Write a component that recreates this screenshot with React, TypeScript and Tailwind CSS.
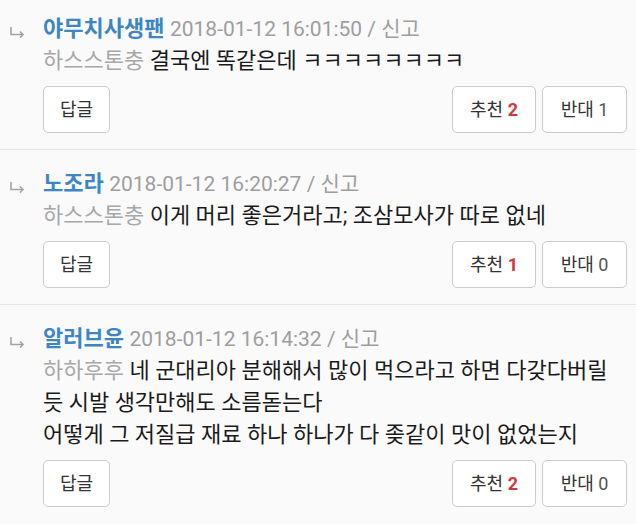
import type { ReactNode } from 'react'

interface Reply {
  author: string
  date: string
  target: string
  lines: ReactNode
  up: number
  down: number
}

const replies: Reply[] = [
  {
    author: '야무치사생팬',
    date: '2018-01-12 16:01:50',
    target: '하스스톤충',
    lines: '결국엔 똑같은데 ㅋㅋㅋㅋㅋㅋㅋㅋ',
    up: 2,
    down: 1,
  },
  {
    author: '노조라',
    date: '2018-01-12 16:20:27',
    target: '하스스톤충',
    lines: '이게 머리 좋은거라고; 조삼모사가 따로 없네',
    up: 1,
    down: 0,
  },
  {
    author: '알러브윤',
    date: '2018-01-12 16:14:32',
    target: '하하후후',
    lines: (
      <>
        네 군대리아 분해해서 많이 먹으라고 하면 다갖다버릴
        <br />
        듯 시발 생각만해도 소름돋는다
        <br />
        어떻게 그 저질급 재료 하나 하나가 다 좆같이 맛이 없었는지
      </>
    ),
    up: 2,
    down: 0,
  },
]

function ReplyArrow() {
  return (
    <svg width="16" height="11" viewBox="0 0 16 11" fill="none" stroke="#a3a3a3" strokeWidth="1.6">
      <path d="M2 0V7.5H14" />
      <path d="M11 4.5L14 7.5L11 10.5" />
    </svg>
  )
}

function ReplyItem({ reply, first, last }: { reply: Reply; first: boolean; last: boolean }) {
  return (
    <div
      className={`flex pb-[16px] ${first ? 'pt-[13px]' : 'pt-[18px]'} ${last ? '' : 'border-b border-[#e4e4e4]'}`}
    >
      <div className="w-[43px] shrink-0 pl-[9px] pt-[14px]">
        <ReplyArrow />
      </div>
      <div className="flex-1 pr-[9px]">
        <div className="text-[22px] leading-[32px] whitespace-nowrap">
          <span className="font-bold text-[#3d86c6]">{reply.author}</span>{' '}
          <span className="text-[21px] text-[#9e9e9e]">{reply.date} / 신고</span>
        </div>
        <div className="text-[22px] leading-[32px] text-[#1a1a1a]">
          <span className="text-[#a8a8a8]">{reply.target}</span> {reply.lines}
        </div>
        <div className="mt-[9px] flex items-center justify-between">
          <button className="h-[47px] w-[67px] rounded-[5px] border border-[#cbcbcb] bg-white text-[18px] text-[#333]">
            답글
          </button>
          <div className="flex gap-[6px]">
            <button className="h-[47px] w-[84px] rounded-[5px] border border-[#cbcbcb] bg-white text-[18px] text-[#333]">
              추천 <span className="font-bold text-[#d2353b]">{reply.up}</span>
            </button>
            <button className="h-[47px] w-[85px] rounded-[5px] border border-[#cbcbcb] bg-white text-[18px] text-[#333]">
              반대 <span className="text-[#555]">{reply.down}</span>
            </button>
          </div>
        </div>
      </div>
    </div>
  )
}

export default function App() {
  return (
    <div
      className="min-h-screen w-[636px] overflow-hidden bg-[#fafafa]"
      style={{ fontFamily: 'Roboto, "Noto Sans CJK KR", sans-serif' }}
    >
      {replies.map((reply, index) => (
        <ReplyItem
          key={index}
          reply={reply}
          first={index === 0}
          last={index === replies.length - 1}
        />
      ))}
    </div>
  )
}
